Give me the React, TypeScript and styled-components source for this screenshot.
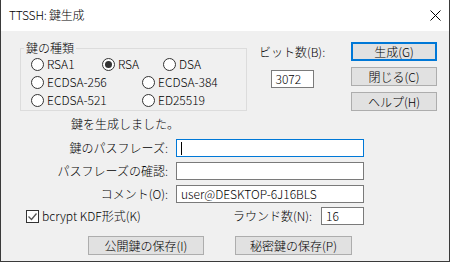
import React from "react";
import styled, { createGlobalStyle } from "styled-components";

const GlobalStyle = createGlobalStyle`
  * { box-sizing: border-box; }
  html, body { margin: 0; padding: 0; background: #ffffff; }
  body {
    font-family: "Noto Sans CJK JP", "Noto Sans", sans-serif;
    font-size: 12px;
    font-weight: 300;
    color: #000;
  }
`;

const Window = styled.div`
  width: 450px;
  height: 262px;
  border: 1px solid #3a3a3a;
  border-top: none;
  display: flex;
  flex-direction: column;
  overflow: hidden;
`;

const TitleBar = styled.div`
  height: 31px;
  background: #ffffff;
  display: flex;
  align-items: center;
  padding: 0 8px 1px 8px;
  font-size: 12px;
  letter-spacing: -0.2px;
`;

const Title = styled.span`
  flex: 1;
  line-height: 14px;
`;

const Client = styled.div`
  flex: 1;
  background: #f0f0f0;
  display: flex;
  flex-direction: column;
  padding-top: 11px;
`;

const TopRow = styled.div`
  display: flex;
  align-items: flex-start;
  padding: 0 12px 0 19px;
`;

const GroupBox = styled.div`
  position: relative;
  margin-top: 6px;
  width: 227px;
  height: 63px;
  border: 1px solid #dcdcdc;
  padding: 6px 0 0 10px;
`;

const Legend = styled.span`
  position: absolute;
  top: -8px;
  left: 3px;
  padding: 0 2px;
  line-height: 14px;
  background: #f0f0f0;
`;

const RadioRow = styled.div`
  display: flex;
  height: 18px;
  align-items: center;
`;

const RadioItem = styled.label<{ $w?: number }>`
  display: flex;
  align-items: center;
  gap: 3px;
  width: ${({ $w }) => ($w ? `${$w}px` : "auto")};
  line-height: 14px;
  white-space: nowrap;
`;

const RadioCircle = styled.span<{ $checked?: boolean }>`
  width: 13px;
  height: 13px;
  border-radius: 50%;
  border: 1px solid #333;
  background: #fff;
  display: flex;
  align-items: center;
  justify-content: center;
  flex: none;

  &::after {
    content: "";
    display: ${({ $checked }) => ($checked ? "block" : "none")};
    width: 7px;
    height: 7px;
    border-radius: 50%;
    background: #333;
  }
`;

const BitsColumn = styled.div`
  display: flex;
  flex-direction: column;
  align-items: center;
  width: 60px;
  margin: 3px 0 0 15px;
`;

const Label = styled.span`
  line-height: 14px;
  white-space: nowrap;
`;

const TextBox = styled.div<{ $w: number; $focused?: boolean }>`
  width: ${({ $w }) => $w}px;
  height: 18px;
  background: #fff;
  border: 1px solid ${({ $focused }) => ($focused ? "#0078d7" : "#7a7a7a")};
  display: flex;
  align-items: center;
  padding-left: 4px;
  line-height: 14px;
  white-space: nowrap;
  overflow: hidden;
`;

const Caret = styled.span`
  width: 1px;
  height: 13px;
  background: #000;
`;

const ButtonColumn = styled.div`
  margin-left: auto;
  display: flex;
  flex-direction: column;
  gap: 6px;
`;

const Button = styled.div<{ $w: number; $default?: boolean }>`
  width: ${({ $w }) => $w}px;
  height: 19px;
  background: #e1e1e1;
  border: ${({ $default }) => ($default ? "2px solid #0078d7" : "1px solid #adadad")};
  display: flex;
  align-items: center;
  justify-content: center;
  line-height: 14px;
  white-space: nowrap;
`;

const Status = styled.div`
  margin: 6px 0 0 70px;
  line-height: 14px;
`;

const FormGrid = styled.div`
  display: grid;
  grid-template-columns: 167px 188px;
  grid-auto-rows: 18px;
  column-gap: 8px;
  row-gap: 5px;
  margin-top: 8px;
`;

const FormLabel = styled.span`
  justify-self: end;
  align-self: center;
  line-height: 14px;
  white-space: nowrap;
`;

const OptionRow = styled.div`
  display: flex;
  align-items: center;
  height: 18px;
  margin-top: 4px;
  padding: 0 85px 0 25px;
`;

const CheckItem = styled.label`
  display: flex;
  align-items: center;
  gap: 3px;
  line-height: 14px;
`;

const CheckBox = styled.span`
  width: 13px;
  height: 13px;
  border: 1px solid #333;
  background: #fff;
  display: flex;
  align-items: center;
  justify-content: center;
`;

const RoundsGroup = styled.div`
  margin-left: auto;
  display: flex;
  align-items: center;
  gap: 9px;
`;

const SaveRow = styled.div`
  display: flex;
  gap: 31px;
  margin-top: 11px;
  padding-left: 87px;
`;

const radios: { label: string; w?: number; checked?: boolean }[][] = [
  [
    { label: "RSA1", w: 71 },
    { label: "RSA", w: 61, checked: true },
    { label: "DSA" },
  ],
  [{ label: "ECDSA-256", w: 111 }, { label: "ECDSA-384" }],
  [{ label: "ECDSA-521", w: 111 }, { label: "ED25519" }],
];

export default function App() {
  return (
    <>
      <GlobalStyle />
      <Window>
        <TitleBar>
          <Title>TTSSH: 鍵生成</Title>
          <svg width="11" height="11" viewBox="0 0 11 11">
            <path d="M0.5 0.5 L10.5 10.5 M10.5 0.5 L0.5 10.5" stroke="#000" strokeWidth="1" />
          </svg>
        </TitleBar>
        <Client>
          <TopRow>
            <GroupBox>
              <Legend>鍵の種類</Legend>
              {radios.map((row, i) => (
                <RadioRow key={i}>
                  {row.map((r) => (
                    <RadioItem key={r.label} $w={r.w}>
                      <RadioCircle $checked={r.checked} />
                      {r.label}
                    </RadioItem>
                  ))}
                </RadioRow>
              ))}
            </GroupBox>
            <BitsColumn>
              <Label>ビット数(B):</Label>
              <TextBox $w={43} style={{ marginTop: 11 }}>3072</TextBox>
            </BitsColumn>
            <ButtonColumn>
              <Button $w={86} $default>生成(G)</Button>
              <Button $w={86}>閉じる(C)</Button>
              <Button $w={86}>ヘルプ(H)</Button>
            </ButtonColumn>
          </TopRow>
          <Status>鍵を生成しました。</Status>
          <FormGrid>
            <FormLabel>鍵のパスフレーズ:</FormLabel>
            <TextBox $w={188} $focused>
              <Caret />
            </TextBox>
            <FormLabel>パスフレーズの確認:</FormLabel>
            <TextBox $w={188} />
            <FormLabel>コメント(O):</FormLabel>
            <TextBox $w={188}>user@DESKTOP-6J16BLS</TextBox>
          </FormGrid>
          <OptionRow>
            <CheckItem>
              <CheckBox>
                <svg width="11" height="11" viewBox="0 0 11 11">
                  <polyline points="1.5,5.5 4.5,8.5 9.5,2.5" fill="none" stroke="#555" strokeWidth="1.3" />
                </svg>
              </CheckBox>
              bcrypt KDF形式(K)
            </CheckItem>
            <RoundsGroup>
              <Label>ラウンド数(N):</Label>
              <TextBox $w={43}>16</TextBox>
            </RoundsGroup>
          </OptionRow>
          <SaveRow>
            <Button $w={116}>公開鍵の保存(I)</Button>
            <Button $w={117}>秘密鍵の保存(P)</Button>
          </SaveRow>
        </Client>
      </Window>
    </>
  );
}
